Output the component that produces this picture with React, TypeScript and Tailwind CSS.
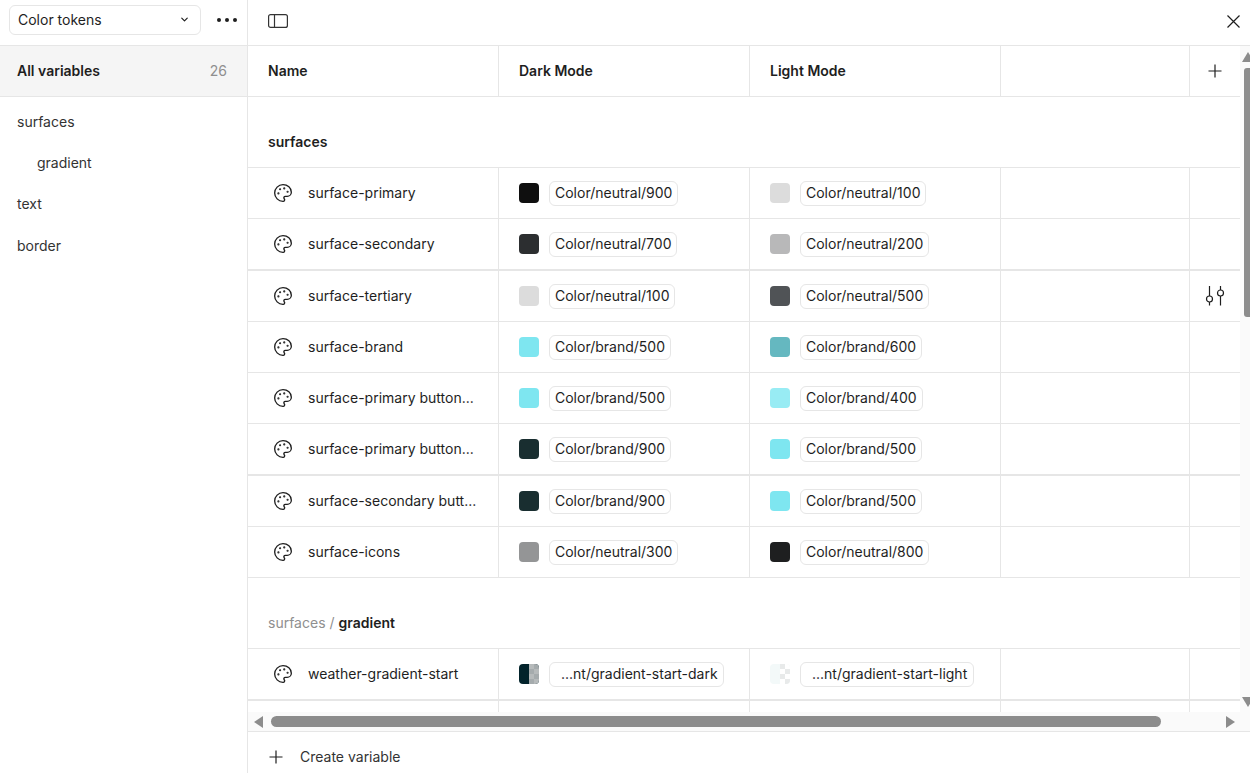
import React from "react";
import { ChevronDown, Palette } from "lucide-react";

interface Alias {
  color: string;
  label: string;
  checker?: "dark" | "light";
}

interface Row {
  name: string;
  dark: Alias;
  light: Alias;
  thick?: boolean;
  hover?: boolean;
}

const surfaces: Row[] = [
  { name: "surface-primary", dark: { color: "#0f0f0f", label: "Color/neutral/900" }, light: { color: "#dcdcdc", label: "Color/neutral/100" } },
  { name: "surface-secondary", dark: { color: "#2c2e30", label: "Color/neutral/700" }, light: { color: "#b8b8b9", label: "Color/neutral/200" }, thick: true },
  { name: "surface-tertiary", dark: { color: "#dcdcdc", label: "Color/neutral/100" }, light: { color: "#505356", label: "Color/neutral/500" }, hover: true },
  { name: "surface-brand", dark: { color: "#7ee6f0", label: "Color/brand/500" }, light: { color: "#65b8c0", label: "Color/brand/600" } },
  { name: "surface-primary button...", dark: { color: "#7ee6f0", label: "Color/brand/500" }, light: { color: "#98ecf4", label: "Color/brand/400" } },
  { name: "surface-primary button...", dark: { color: "#192e30", label: "Color/brand/900" }, light: { color: "#7ee6f0", label: "Color/brand/500" }, thick: true },
  { name: "surface-secondary butt...", dark: { color: "#192e30", label: "Color/brand/900" }, light: { color: "#7ee6f0", label: "Color/brand/500" } },
  { name: "surface-icons", dark: { color: "#949596", label: "Color/neutral/300" }, light: { color: "#1e1f20", label: "Color/neutral/800" } },
];

const gradient: Row[] = [
  {
    name: "weather-gradient-start",
    dark: { color: "#02232b", label: "...nt/gradient-start-dark", checker: "dark" },
    light: { color: "#f3f9f9", label: "...nt/gradient-start-light", checker: "light" },
    thick: true,
  },
];

const Checker = ({ light }: { light: boolean }) => {
  const a = light ? "#ffffff" : "#a5abad";
  const b = light ? "#e8eaea" : "#b6babb";
  return (
    <svg viewBox="0 0 2 4" className="h-full w-1/2" shapeRendering="crispEdges">
      {[0, 1, 2, 3].map((y) =>
        [0, 1].map((x) => (
          <rect key={`${x}-${y}`} x={x} y={y} width="1" height="1" fill={(x + y) % 2 ? a : b} />
        ))
      )}
    </svg>
  );
};

const Swatch = ({ alias }: { alias: Alias }) => (
  <div
    className="flex h-5 w-5 shrink-0 overflow-hidden rounded-[4px]"
    style={{ backgroundColor: alias.color }}
  >
    {alias.checker && (
      <>
        <div className="w-1/2" />
        <Checker light={alias.checker === "light"} />
      </>
    )}
  </div>
);

const AliasCell = ({ alias }: { alias: Alias }) => (
  <div className="flex w-[251px] shrink-0 items-center gap-[10px] border-r border-[#e6e6e6] pl-5">
    <Swatch alias={alias} />
    <span
      className={`flex h-[25px] items-center rounded-[6px] border border-[#e6e6e6] pb-[1px] text-[14px] text-[#1e1e1e] ${
        alias.checker === "light" ? "pl-[11px] pr-[6px]" : alias.checker ? "pl-[11px] pr-[5px]" : "px-[5px]"
      }`}
    >
      {alias.label}
    </span>
  </div>
);

const PlusIcon = () => (
  <svg width="14" height="14" viewBox="0 0 14 14" fill="none" stroke="#1e1e1e" strokeWidth="1.2">
    <path d="M7 0.5V13.5M0.5 7H13.5" />
  </svg>
);

const VariableRow = ({ row }: { row: Row }) => (
  <div
    className={`flex shrink-0 items-stretch ${
      row.thick ? "h-[52px] border-b-2 border-[#e6e6e6]" : "h-[51px] border-b border-[#e6e6e6]"
    }`}
  >
    <div className="flex w-[251px] shrink-0 items-center border-r border-[#e6e6e6] pl-[25px]">
      <Palette size={20} strokeWidth={1.6} className="mb-[1px] shrink-0 text-[#1e1e1e]" />
      <span className="ml-[15px] whitespace-nowrap pb-[1px] text-[14px] text-[#1e1e1e]">{row.name}</span>
    </div>
    <AliasCell alias={row.dark} />
    <AliasCell alias={row.light} />
    <div className="w-[189px] shrink-0 border-r border-[#e6e6e6]" />
    <div className="flex flex-1 items-center justify-center pr-[1px]">
      {row.hover && (
        <svg width="20" height="20" viewBox="0 0 20 20" fill="none" stroke="#1e1e1e" strokeWidth="1.2">
          <path d="M4.5 0V10M4.5 16V19.5M15.5 0V4M15.5 10V19.5" />
          <circle cx="4.5" cy="13" r="3" />
          <circle cx="15.5" cy="7" r="3" />
        </svg>
      )}
    </div>
  </div>
);

const GroupTitle = ({ parent, title }: { parent?: string; title: string }) => (
  <div className="flex h-[71px] shrink-0 items-end border-b border-[#e6e6e6] pb-[15px] pl-5 text-[14px]">
    {parent && <span className="mr-1 text-[#8f8f8f]">{parent} /</span>}
    <span className="font-semibold text-[#1e1e1e]">{title}</span>
  </div>
);

const App: React.FC = () => {
  return (
    <div className="flex h-[773px] w-[1250px] overflow-hidden bg-white font-['Inter',sans-serif] text-[14px] text-[#1e1e1e]">
      <aside className="flex w-[248px] shrink-0 flex-col border-r border-[#e6e6e6]">
        <div className="flex h-[46px] shrink-0 items-center border-b border-[#e6e6e6] pb-[5px] pl-[9px]">
          <div className="flex h-[30px] w-[192px] items-center justify-between rounded-[6px] border border-[#e6e6e6] pb-[1px] pl-2 pr-[10px]">
            <span className="text-[14px]">Color tokens</span>
            <ChevronDown size={11} strokeWidth={2.6} />
          </div>
          <div className="ml-[16px] flex items-center gap-[4px]">
            <span className="h-[4px] w-[4px] rounded-full bg-[#1e1e1e]" />
            <span className="h-[4px] w-[4px] rounded-full bg-[#1e1e1e]" />
            <span className="h-[4px] w-[4px] rounded-full bg-[#1e1e1e]" />
          </div>
        </div>
        <div className="flex h-[51px] shrink-0 items-center justify-between border-b border-[#e6e6e6] bg-[#f5f5f5] pb-[2px] pl-[17px] pr-5">
          <span className="font-semibold text-[#1e1e1e]">All variables</span>
          <span className="text-[#8f8f8f]">26</span>
        </div>
        <nav className="flex flex-col pl-[17px] pt-[4px] text-[#333333]">
          <div className="flex h-[41px] items-center">surfaces</div>
          <div className="flex h-[41px] items-center pl-5">gradient</div>
          <div className="flex h-[41px] items-center">text</div>
          <div className="flex h-[42px] items-center">border</div>
        </nav>
      </aside>

      <main className="flex min-w-0 flex-1 flex-col">
        <div className="flex h-[46px] shrink-0 items-center justify-between border-b border-[#e6e6e6] pb-[3px] pl-5 pr-[10px]">
          <svg width="20" height="14" viewBox="0 0 20 14" fill="none" stroke="#333333" strokeWidth="1.2">
            <rect x="0.6" y="0.6" width="18.8" height="12.8" rx="2" />
            <path d="M6.5 0.6V13.4" />
          </svg>
          <svg width="13" height="13" viewBox="0 0 13 13" fill="none" stroke="#1e1e1e" strokeWidth="1.2">
            <path d="M0.5 0.5L12.5 12.5M12.5 0.5L0.5 12.5" />
          </svg>
        </div>

        <div className="relative min-h-0 flex-1 overflow-hidden">
          <div className="flex h-[51px] items-stretch border-b border-[#e6e6e6] font-semibold">
            <div className="flex w-[251px] shrink-0 items-center border-r border-[#e6e6e6] pb-[2px] pl-5">Name</div>
            <div className="flex w-[251px] shrink-0 items-center border-r border-[#e6e6e6] pb-[2px] pl-5">Dark Mode</div>
            <div className="flex w-[251px] shrink-0 items-center border-r border-[#e6e6e6] pb-[2px] pl-5">Light Mode</div>
            <div className="w-[189px] shrink-0 border-r border-[#e6e6e6]" />
            <div className="flex w-[50px] items-center justify-center pb-[1px] pr-[1px]">
              <PlusIcon />
            </div>
          </div>

          <div className="mr-[10px] flex flex-col">
            <GroupTitle title="surfaces" />
            {surfaces.map((row, i) => (
              <VariableRow key={i} row={row} />
            ))}
            <GroupTitle parent="surfaces" title="gradient" />
            {gradient.map((row, i) => (
              <VariableRow key={i} row={row} />
            ))}
            <div className="flex h-[20px] items-stretch">
              <div className="w-[251px] border-r border-[#e6e6e6]" />
              <div className="w-[251px] border-r border-[#e6e6e6]" />
              <div className="w-[251px] border-r border-[#e6e6e6]" />
              <div className="w-[189px] border-r border-[#e6e6e6]" />
            </div>
          </div>

          {/* vertical scrollbar */}
          <div className="absolute bottom-[20px] right-0 top-0 w-[10px] overflow-hidden bg-[#fafafa]">
            <div className="absolute left-[2px] top-[6px] h-0 w-0 border-x-[6px] border-b-[10px] border-x-transparent border-b-[#8c8c8c]" />
            <div className="absolute left-[4px] top-[22px] h-[249px] w-[6px] rounded-l-[3px] bg-[#8c8c8c]" />
            <div className="absolute bottom-[5px] left-[2px] h-0 w-0 border-x-[6px] border-t-[10px] border-x-transparent border-t-[#8c8c8c]" />
          </div>

          {/* horizontal scrollbar */}
          <div className="absolute bottom-0 left-0 right-0 flex h-[20px] items-center border-b border-[#e6e6e6] bg-[#fafafa] pl-[6px] pr-[15px]">
            <div className="h-0 w-0 border-y-[6px] border-r-[9px] border-y-transparent border-r-[#8c8c8c]" />
            <div className="ml-[8px] h-[11px] w-[890px] rounded-full bg-[#8c8c8c]" />
            <div className="ml-auto h-0 w-0 border-y-[6px] border-l-[9px] border-y-transparent border-l-[#8c8c8c]" />
          </div>
        </div>

        <div className="flex h-[41px] shrink-0 items-center pl-[21px] pt-[8px] text-[#333333]">
          <PlusIcon />
          <span className="ml-[17px]">Create variable</span>
        </div>
      </main>
    </div>
  );
};

export default App;
